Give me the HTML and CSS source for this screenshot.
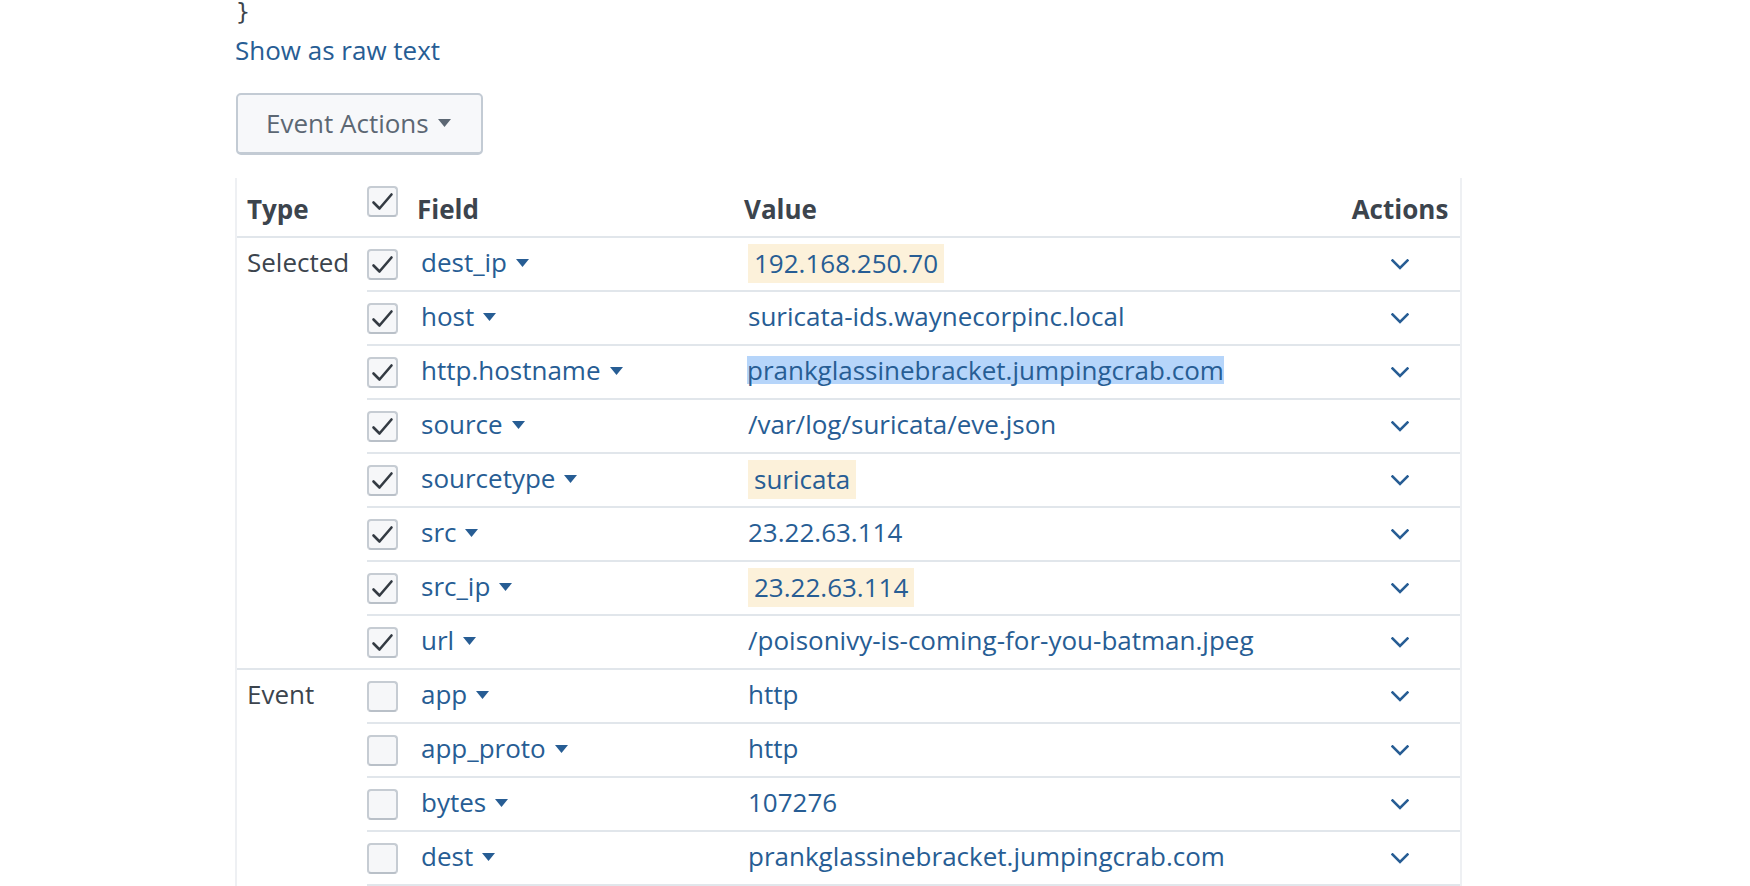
FILE: index.html
```html
<!DOCTYPE html>
<html lang="en">
<head>
<meta charset="utf-8">
<title>Event fields</title>
<link rel="stylesheet" href="styles.css">
</head>
<body>
<div class="page">
  <div class="brace">}</div>
  <div class="raw"><a class="raw-link" href="#">Show as raw text</a></div>
  <button class="btn" type="button">Event Actions <svg class="btn-caret" width="13" height="8" viewBox="0 0 13 8"><path d="M0 0H13L6.5 8Z"/></svg></button>

  <div class="fields">
    <div class="head">
      <div class="c-type">Type</div>
      <div class="c-cb"><span class="cb"><svg width="27" height="27" viewBox="0 0 27 27"><path d="M4.5 14.5L10.5 20.5L22.5 6.5"/></svg></span></div>
      <div class="c-field">Field</div>
      <div class="c-value">Value</div>
      <div class="c-actions">Actions</div>
    </div>

    <div class="group">
      <div class="c-type">Selected</div>
      <div class="rows">
        <div class="row">
          <div class="c-cb"><span class="cb"><svg width="27" height="27" viewBox="0 0 27 27"><path d="M4.5 14.5L10.5 20.5L22.5 6.5"/></svg></span></div>
          <div class="c-field"><span class="fname">dest_ip</span><svg class="caret" width="13" height="8" viewBox="0 0 13 8"><path d="M0 0H13L6.5 8Z"/></svg></div>
          <div class="c-value"><span class="hl">192.168.250.70</span></div>
          <div class="c-actions"><svg class="chev" width="18" height="11" viewBox="0 0 18 11"><path d="M1.5 1.5L9 9L16.5 1.5"/></svg></div>
        </div>
        <div class="row">
          <div class="c-cb"><span class="cb"><svg width="27" height="27" viewBox="0 0 27 27"><path d="M4.5 14.5L10.5 20.5L22.5 6.5"/></svg></span></div>
          <div class="c-field"><span class="fname">host</span><svg class="caret" width="13" height="8" viewBox="0 0 13 8"><path d="M0 0H13L6.5 8Z"/></svg></div>
          <div class="c-value">suricata-ids.waynecorpinc.local</div>
          <div class="c-actions"><svg class="chev" width="18" height="11" viewBox="0 0 18 11"><path d="M1.5 1.5L9 9L16.5 1.5"/></svg></div>
        </div>
        <div class="row">
          <div class="c-cb"><span class="cb"><svg width="27" height="27" viewBox="0 0 27 27"><path d="M4.5 14.5L10.5 20.5L22.5 6.5"/></svg></span></div>
          <div class="c-field"><span class="fname">http.hostname</span><svg class="caret" width="13" height="8" viewBox="0 0 13 8"><path d="M0 0H13L6.5 8Z"/></svg></div>
          <div class="c-value"><span class="sel">prankglassinebracket.jumpingcrab.com</span></div>
          <div class="c-actions"><svg class="chev" width="18" height="11" viewBox="0 0 18 11"><path d="M1.5 1.5L9 9L16.5 1.5"/></svg></div>
        </div>
        <div class="row">
          <div class="c-cb"><span class="cb"><svg width="27" height="27" viewBox="0 0 27 27"><path d="M4.5 14.5L10.5 20.5L22.5 6.5"/></svg></span></div>
          <div class="c-field"><span class="fname">source</span><svg class="caret" width="13" height="8" viewBox="0 0 13 8"><path d="M0 0H13L6.5 8Z"/></svg></div>
          <div class="c-value">/var/log/suricata/eve.json</div>
          <div class="c-actions"><svg class="chev" width="18" height="11" viewBox="0 0 18 11"><path d="M1.5 1.5L9 9L16.5 1.5"/></svg></div>
        </div>
        <div class="row">
          <div class="c-cb"><span class="cb"><svg width="27" height="27" viewBox="0 0 27 27"><path d="M4.5 14.5L10.5 20.5L22.5 6.5"/></svg></span></div>
          <div class="c-field"><span class="fname">sourcetype</span><svg class="caret" width="13" height="8" viewBox="0 0 13 8"><path d="M0 0H13L6.5 8Z"/></svg></div>
          <div class="c-value"><span class="hl">suricata</span></div>
          <div class="c-actions"><svg class="chev" width="18" height="11" viewBox="0 0 18 11"><path d="M1.5 1.5L9 9L16.5 1.5"/></svg></div>
        </div>
        <div class="row">
          <div class="c-cb"><span class="cb"><svg width="27" height="27" viewBox="0 0 27 27"><path d="M4.5 14.5L10.5 20.5L22.5 6.5"/></svg></span></div>
          <div class="c-field"><span class="fname">src</span><svg class="caret" width="13" height="8" viewBox="0 0 13 8"><path d="M0 0H13L6.5 8Z"/></svg></div>
          <div class="c-value">23.22.63.114</div>
          <div class="c-actions"><svg class="chev" width="18" height="11" viewBox="0 0 18 11"><path d="M1.5 1.5L9 9L16.5 1.5"/></svg></div>
        </div>
        <div class="row">
          <div class="c-cb"><span class="cb"><svg width="27" height="27" viewBox="0 0 27 27"><path d="M4.5 14.5L10.5 20.5L22.5 6.5"/></svg></span></div>
          <div class="c-field"><span class="fname">src_ip</span><svg class="caret" width="13" height="8" viewBox="0 0 13 8"><path d="M0 0H13L6.5 8Z"/></svg></div>
          <div class="c-value"><span class="hl">23.22.63.114</span></div>
          <div class="c-actions"><svg class="chev" width="18" height="11" viewBox="0 0 18 11"><path d="M1.5 1.5L9 9L16.5 1.5"/></svg></div>
        </div>
        <div class="row">
          <div class="c-cb"><span class="cb"><svg width="27" height="27" viewBox="0 0 27 27"><path d="M4.5 14.5L10.5 20.5L22.5 6.5"/></svg></span></div>
          <div class="c-field"><span class="fname">url</span><svg class="caret" width="13" height="8" viewBox="0 0 13 8"><path d="M0 0H13L6.5 8Z"/></svg></div>
          <div class="c-value">/poisonivy-is-coming-for-you-batman.jpeg</div>
          <div class="c-actions"><svg class="chev" width="18" height="11" viewBox="0 0 18 11"><path d="M1.5 1.5L9 9L16.5 1.5"/></svg></div>
        </div>
      </div>
    </div>

    <div class="group group-open">
      <div class="c-type">Event</div>
      <div class="rows">
        <div class="row">
          <div class="c-cb"><span class="cb"></span></div>
          <div class="c-field"><span class="fname">app</span><svg class="caret" width="13" height="8" viewBox="0 0 13 8"><path d="M0 0H13L6.5 8Z"/></svg></div>
          <div class="c-value">http</div>
          <div class="c-actions"><svg class="chev" width="18" height="11" viewBox="0 0 18 11"><path d="M1.5 1.5L9 9L16.5 1.5"/></svg></div>
        </div>
        <div class="row">
          <div class="c-cb"><span class="cb"></span></div>
          <div class="c-field"><span class="fname">app_proto</span><svg class="caret" width="13" height="8" viewBox="0 0 13 8"><path d="M0 0H13L6.5 8Z"/></svg></div>
          <div class="c-value">http</div>
          <div class="c-actions"><svg class="chev" width="18" height="11" viewBox="0 0 18 11"><path d="M1.5 1.5L9 9L16.5 1.5"/></svg></div>
        </div>
        <div class="row">
          <div class="c-cb"><span class="cb"></span></div>
          <div class="c-field"><span class="fname">bytes</span><svg class="caret" width="13" height="8" viewBox="0 0 13 8"><path d="M0 0H13L6.5 8Z"/></svg></div>
          <div class="c-value">107276</div>
          <div class="c-actions"><svg class="chev" width="18" height="11" viewBox="0 0 18 11"><path d="M1.5 1.5L9 9L16.5 1.5"/></svg></div>
        </div>
        <div class="row">
          <div class="c-cb"><span class="cb"></span></div>
          <div class="c-field"><span class="fname">dest</span><svg class="caret" width="13" height="8" viewBox="0 0 13 8"><path d="M0 0H13L6.5 8Z"/></svg></div>
          <div class="c-value">prankglassinebracket.jumpingcrab.com</div>
          <div class="c-actions"><svg class="chev" width="18" height="11" viewBox="0 0 18 11"><path d="M1.5 1.5L9 9L16.5 1.5"/></svg></div>
        </div>
      </div>
    </div>
  </div>
</div>
</body>
</html>
```

FILE: styles.css
```css
html, body {
  margin: 0;
  padding: 0;
  background: #ffffff;
  height: 886px;
  overflow: hidden;
}

body {
  font-family: "Open Sans", "Lato", "Noto Sans", sans-serif;
  font-size: 26px;
  color: #3c444d;
}

.page {
  padding-left: 235px;
}

.brace {
  font-family: "DejaVu Sans Mono", "Liberation Mono", monospace;
  font-size: 23px;
  line-height: 28px;
  height: 28px;
  margin-top: -2px;
  color: #3c444d;
  padding-left: 1px;
}

.raw {
  margin-top: 6px;
  line-height: 36px;
  height: 36px;
}

.raw-link {
  color: #275d94;
  text-decoration: none;
}

.btn {
  margin-top: 25px;
  height: 62px;
  box-sizing: border-box;
  display: inline-flex;
  align-items: center;
  gap: 9px;
  padding: 0 30px 2px 28px;
  font-family: inherit;
  font-size: 26px;
  color: #5c6773;
  background: #f7f8fa;
  border: 2px solid #c3cbd4;
  border-bottom-width: 3px;
  border-radius: 5px;
  margin-left: 1px;
}

.btn-caret {
  fill: #5c6773;
  margin-top: 1px;
}

.fields {
  margin-top: 23px;
  width: 1223px;
  border-left: 2px solid #eef0f3;
  border-right: 2px solid #eef0f3;
}

.head {
  display: flex;
  height: 60px;
  box-sizing: border-box;
  border-bottom: 2px solid #e1e6eb;
  align-items: flex-end;
  font-weight: 700;
  line-height: 30px;
}

.head .c-type,
.head .c-field,
.head .c-value,
.head .c-actions {
  padding-bottom: 12px;
}

.head .c-cb {
  padding-bottom: 19px;
}

.head .c-field {
  padding-left: 6px;
  width: 330px;
}

.head .c-value {
  padding-left: 3px;
}

.c-type {
  width: 130px;
  flex: none;
  box-sizing: border-box;
  padding-left: 10px;
}

.c-cb {
  width: 44px;
  flex: none;
  display: flex;
  align-items: center;
}

.c-field {
  width: 324px;
  flex: none;
  box-sizing: border-box;
  padding-left: 10px;
  display: flex;
  align-items: center;
  gap: 9px;
}

.c-value {
  flex: 1;
  box-sizing: border-box;
  padding-left: 13px;
  display: flex;
  align-items: center;
}

.row .c-field,
.row .c-value {
  padding-bottom: 4px;
}

.c-actions {
  width: 120px;
  flex: none;
  display: flex;
  justify-content: center;
  align-items: center;
}

.group {
  display: flex;
  border-bottom: 2px solid #e1e6eb;
}

.group-open {
  border-bottom: none;
}

.group > .c-type {
  line-height: 30px;
  padding-top: 9px;
}

.rows {
  flex: 1;
}

.row {
  display: flex;
  height: 54px;
  box-sizing: border-box;
  line-height: 30px;
  color: #275d94;
  border-bottom: 2px solid #e1e6eb;
}

.group:not(.group-open) .row:last-child {
  height: 52px;
  border-bottom: none;
}

.cb {
  display: block;
  width: 31px;
  height: 31px;
  box-sizing: border-box;
  border: 2px solid #c6ccd3;
  border-bottom-color: #b9c0c8;
  border-radius: 4px;
  background: #f6f7f9;
}

.cb svg {
  display: block;
  fill: none;
  stroke: #343b43;
  stroke-width: 2.6;
  stroke-linecap: round;
  stroke-linejoin: round;
}

.caret {
  fill: #275d94;
  flex: none;
  margin-top: 1px;
}

.hl {
  display: inline-block;
  line-height: 39px;
  padding: 0 6px;
  background: #fcf1da;
  position: relative;
  top: 1px;
}

.sel {
  display: inline-block;
  line-height: 28px;
  margin-left: -1px;
  background: #b6d5fa;
}

.chev {
  fill: none;
  stroke: #275d94;
  stroke-width: 2.6;
  stroke-linecap: square;
  stroke-linejoin: miter;
}
```
